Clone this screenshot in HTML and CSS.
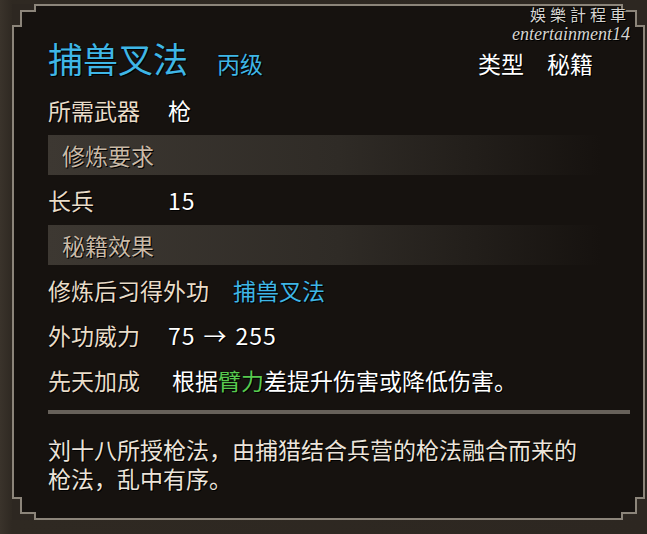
FILE: index.html
```html
<!DOCTYPE html>
<html lang="zh-CN">
  <head>
    <meta charset="UTF-8" />
    <meta name="viewport" content="width=device-width, initial-scale=1.0" />
    <title>捕兽叉法</title>
    <link rel="stylesheet" href="styles.css">
  </head>
  <body>
    <div class="screen">
      <div class="panel">
        <svg class="corner tl" viewBox="0 0 26 26"><polygon points="0,0 22,0 22,6 8,6 8,21 0,21" /><path d="M1 26V22H9V7H23V0" /></svg>
        <svg class="corner tr" viewBox="0 0 26 26"><polygon points="0,0 22,0 22,6 8,6 8,21 0,21" /><path d="M1 26V22H9V7H23V0" /></svg>
        <svg class="corner bl" viewBox="0 0 26 26"><polygon points="0,0 22,0 22,6 8,6 8,21 0,21" /><path d="M1 26V22H9V7H23V0" /></svg>
        <svg class="corner br" viewBox="0 0 26 26"><polygon points="0,0 22,0 22,6 8,6 8,21 0,21" /><path d="M1 26V22H9V7H23V0" /></svg>

        <div class="mark">
          <div class="mark-cn">娛樂計程車</div>
          <div class="mark-en">entertainment14</div>
        </div>

        <div class="head">
          <span class="title">捕兽叉法</span>
          <span class="grade">丙级</span>
          <span class="type">类型　秘籍</span>
        </div>

        <div class="row"><span class="label">所需武器</span><span class="value">枪</span></div>
        <div class="bar">修炼要求</div>
        <div class="row"><span class="label">长兵</span><span class="value num">15</span></div>
        <div class="bar">秘籍效果</div>
        <div class="row"><span class="label">修炼后习得外功</span><span class="value blue">捕兽叉法</span></div>
        <div class="row"><span class="label">外功威力</span><span class="value num">75<span class="arrow">→</span>255</span></div>
        <div class="row"><span class="label">先天加成</span><span class="value shift">根据<span class="green">臂力</span>差提升伤害或降低伤害。</span></div>

        <div class="rule"></div>
        <p class="desc">刘十八所授枪法，由捕猎结合兵营的枪法融合而来的<br>枪法，乱中有序。</p>
      </div>
    </div>
  </body>
</html>
```

FILE: styles.css
```css
body {
  margin: 0;
  background: #2d2721;
  font-family: "Noto Sans CJK SC", "Noto Sans", sans-serif;
}
.screen {
  padding: 4px 2px 14px 12px;
  background: linear-gradient(to right, #3a332b 0, #2f2922 12px, #2d2721 100%);
}
.panel {
  position: relative;
  box-sizing: border-box;
  height: 516px;
  padding: 26px 13px 0 34px;
  border: 2px solid #8c857a;
  background: #16120f;
  text-shadow: 0 0 1px #000, 1px 1px 0 #000;
}

/* stepped frame corners */
.corner {
  position: absolute;
  width: 26px;
  height: 26px;
}
.corner polygon {
  fill: #2d2721;
}
.corner path {
  fill: none;
  stroke: #8c857a;
  stroke-width: 2;
}
.tl {
  top: -2px;
  left: -2px;
}
.tr {
  top: -2px;
  right: -2px;
  transform: scaleX(-1);
}
.bl {
  bottom: -2px;
  left: -2px;
  transform: scaleY(-1);
}
.br {
  bottom: -2px;
  right: -2px;
  transform: scale(-1, -1);
}

/* watermark */
.mark {
  position: absolute;
  top: -3px;
  right: 13px;
  text-align: right;
  color: #d6d4d0;
}
.mark-cn {
  font-family: "Noto Sans CJK TC", serif;
  font-size: 16px;
  line-height: 22px;
  letter-spacing: 4px;
}
.mark-en {
  font-family: "Liberation Serif", serif;
  font-style: italic;
  font-size: 18px;
  line-height: 18px;
}

.head {
  display: flex;
  align-items: baseline;
  height: 52px;
  line-height: 52px;
  margin-bottom: 4px;
}
.title {
  font-size: 35px;
  color: #3fb6e6;
}
.grade {
  margin-left: 29px;
  font-size: 23px;
  color: #3fb6e6;
}
.type {
  margin-left: auto;
  margin-right: 37px;
  font-size: 23px;
  color: #fff;
}

.row {
  display: flex;
  height: 45px;
  line-height: 45px;
  font-size: 23px;
}
.label {
  min-width: 96px;
  margin-right: 24px;
  color: #e9dcc8;
}
.value {
  color: #fff;
}
.num {
  letter-spacing: 1px;
}
.arrow {
  margin: 0 8px;
}
.value.shift {
  margin-left: 4px;
}
.blue {
  color: #3fb6e6;
}
.green {
  color: #58c94f;
}

.bar {
  height: 40px;
  line-height: 40px;
  margin: 2px 0 3px;
  padding-left: 14px;
  font-size: 23px;
  color: #c9b9a6;
  background: linear-gradient(to right, #3d3832 0%, #2f2b26 50%, rgba(47, 43, 38, 0) 95%);
}

.rule {
  height: 4px;
  margin-top: 7px;
  background: #67615a;
}
.desc {
  margin: 21px 0 0;
  font-size: 23px;
  line-height: 29px;
  color: #ece4da;
}
```
